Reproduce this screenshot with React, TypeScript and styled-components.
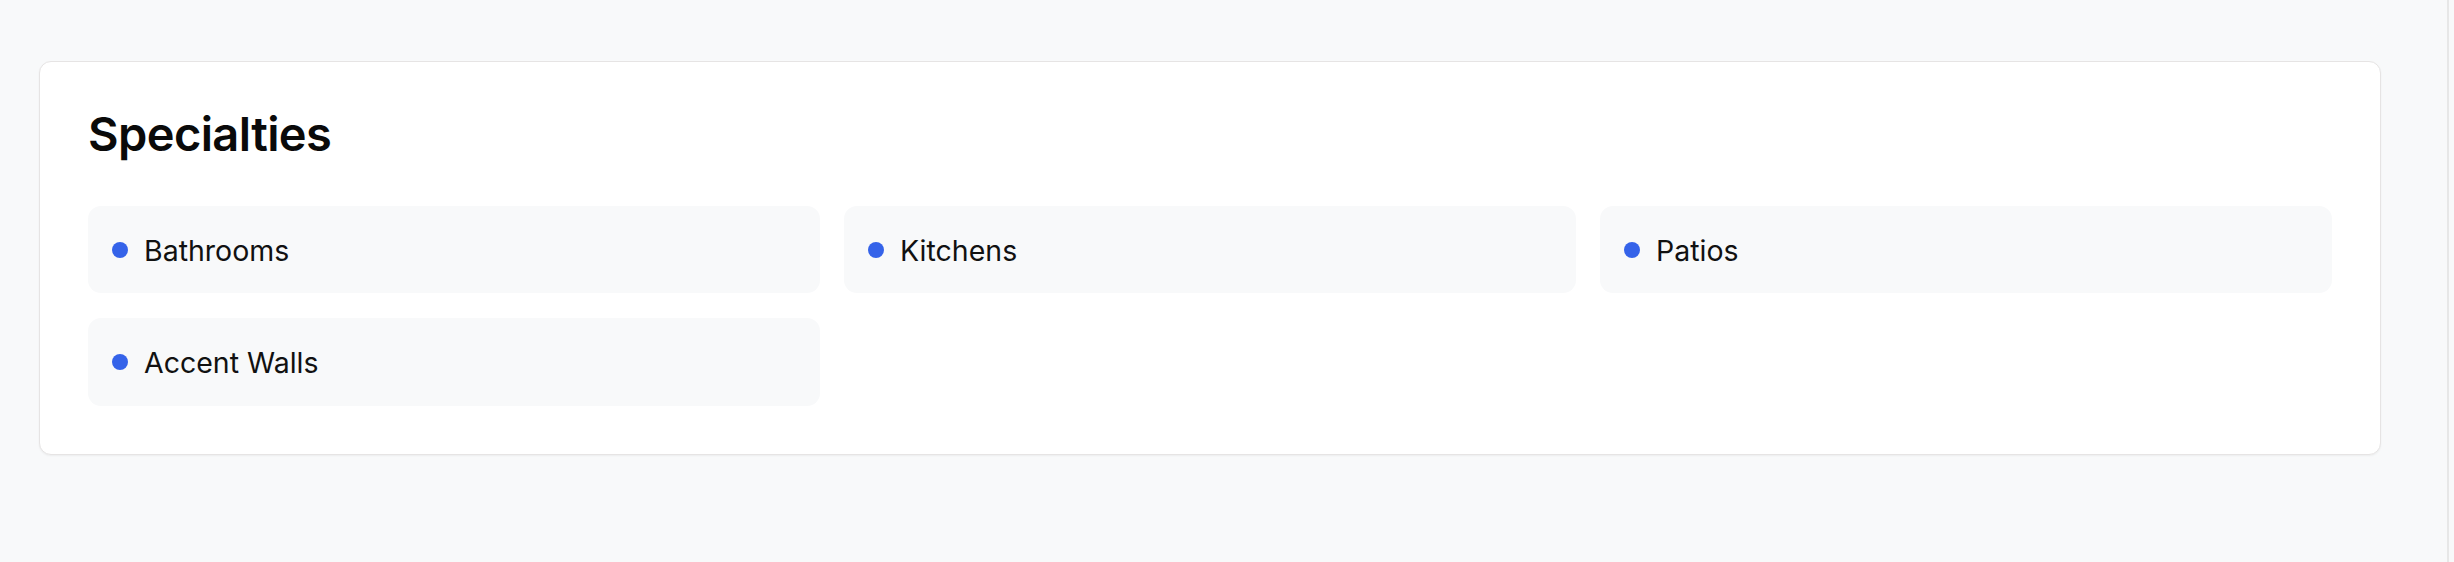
import React from "react";
import styled, { createGlobalStyle } from "styled-components";

const GlobalStyle = createGlobalStyle`
  html, body {
    margin: 0;
    padding: 0;
    background: #f8f9fa;
    font-family: Inter, "Noto Sans", Arial, sans-serif;
    -webkit-font-smoothing: antialiased;
  }
  * { box-sizing: border-box; }
`;

const Page = styled.div`
  display: flex;
  min-height: 562px;
  background: #f8f9fa;
`;

const Main = styled.main`
  flex: 1;
  padding: 61px 66px 0 39px;
`;

const Gutter = styled.div`
  width: 7px;
  flex-shrink: 0;
  border-left: 2px solid #e7e7e7;
  background: #f8f9fa;
`;

const Card = styled.section`
  background: #ffffff;
  border: 1px solid #e6e4e4;
  border-radius: 12px;
  padding: 48px;
  box-shadow: 0 1px 2px rgba(0, 0, 0, 0.05);
`;

const Title = styled.h2`
  margin: 0 0 49px;
  font-size: 47px;
  line-height: 1;
  font-weight: 600;
  color: #0a0a0a;
  letter-spacing: -0.6px;
`;

const Grid = styled.div`
  display: grid;
  grid-template-columns: repeat(3, 1fr);
  column-gap: 24px;
  row-gap: 25px;
`;

const Item = styled.div`
  display: flex;
  align-items: center;
  gap: 16px;
  padding: 24px;
  background: #f8f9fa;
  border-radius: 13px;
  font-size: 28.5px;
  line-height: 1.38;
  color: #111111;
`;

const Dot = styled.span`
  width: 16px;
  height: 16px;
  border-radius: 50%;
  background: #3563e9;
  flex-shrink: 0;
`;

const Label = styled.span`
  position: relative;
  top: 1px;
`;

const specialties = ["Bathrooms", "Kitchens", "Patios", "Accent Walls"];

export default function App() {
  return (
    <>
      <GlobalStyle />
      <Page>
        <Main>
          <Card>
            <Title>Specialties</Title>
            <Grid>
              {specialties.map((s) => (
                <Item key={s}>
                  <Dot />
                  <Label>{s}</Label>
                </Item>
              ))}
            </Grid>
          </Card>
        </Main>
        <Gutter />
      </Page>
    </>
  );
}
